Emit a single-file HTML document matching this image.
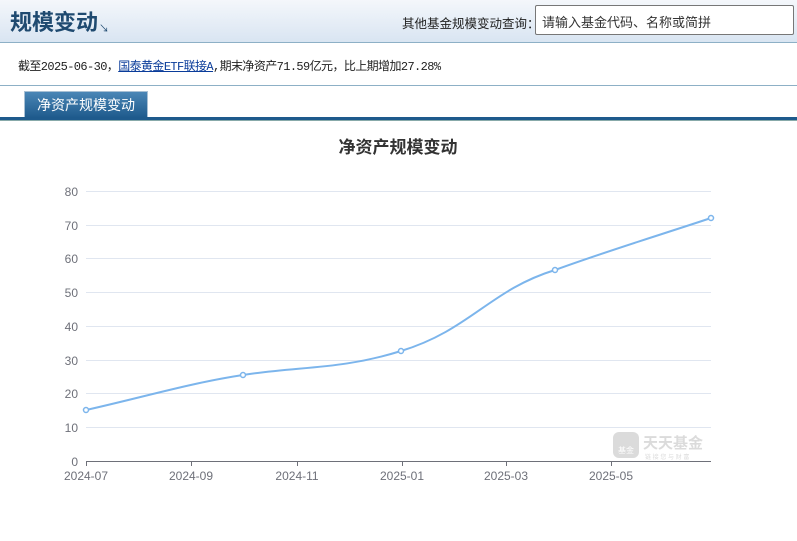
<!DOCTYPE html>
<html><head><meta charset="utf-8"><style>
body{margin:0;width:797px;height:541px;background:#fff;font-family:"Liberation Sans","Noto Sans CJK SC",sans-serif;overflow:hidden;position:relative}
.hd{position:absolute;left:0;top:0;width:797px;height:42px;background:linear-gradient(#f4f7fb,#d9e5f2);border-bottom:1px solid #8db0c6}
.t{position:absolute;left:10px;top:5px;font-size:22px;font-weight:bold;color:#1f4a70}
.arr{position:absolute;left:99px;top:20px;font-size:10px;color:#1f4a70}
.q{position:absolute;left:402px;top:13px;font-size:12.5px;color:#222;white-space:nowrap}
.in{position:absolute;left:535px;top:5px;width:259px;height:30px;border:1px solid #777;background:#fff;box-sizing:border-box;font-size:13px;color:#333;padding:6px 0 0 6px;border-radius:2px}
.info{position:absolute;left:18px;top:57px;font-size:12px;color:#222;font-family:"Liberation Mono","Noto Sans CJK SC",monospace;letter-spacing:-0.6px}
.info a{color:#0a3c9a;text-decoration:underline}
.l2{position:absolute;left:0;top:85px;width:797px;height:1px;background:#8db0c6}
.tab{position:absolute;left:24px;top:91px;width:124px;height:27px;background:linear-gradient(#4a86b6,#1e5a8c);border:1px solid #a8c0d4;border-bottom:none;box-sizing:border-box;color:#fff;font-size:14px;text-align:center;line-height:26px}
.l3{position:absolute;left:0;top:117px;width:797px;height:3px;background:#1e5a8c;border-bottom:1px solid #8aa}
</style></head><body>
<div class="hd"><div class="t">规模变动</div><div class="arr">↘</div>
<div class="q">其他基金规模变动查询：</div><div class="in">请输入基金代码、名称或简拼</div></div>
<div class="info">截至2025-06-30，<a>国泰黄金ETF联接A</a>,期末净资产71.59亿元，比上期增加27.28%</div>
<div class="l2"></div>
<div class="tab">净资产规模变动</div>
<div class="l3"></div>
<svg style="position:absolute;left:0;top:0" width="797" height="541" font-family="Liberation Sans,Noto Sans CJK SC,sans-serif">
<text x="398" y="153" text-anchor="middle" font-size="17" font-weight="bold" fill="#333">净资产规模变动</text>
<g stroke="#e0e6f0" stroke-width="1">
<line x1="86" x2="711" y1="191.5" y2="191.5"/><line x1="86" x2="711" y1="225.5" y2="225.5"/><line x1="86" x2="711" y1="258.5" y2="258.5"/><line x1="86" x2="711" y1="292.5" y2="292.5"/><line x1="86" x2="711" y1="326.5" y2="326.5"/><line x1="86" x2="711" y1="360.5" y2="360.5"/><line x1="86" x2="711" y1="393.5" y2="393.5"/><line x1="86" x2="711" y1="427.5" y2="427.5"/></g>
<line x1="86" x2="711" y1="461.5" y2="461.5" stroke="#6e7079"/>
<g stroke="#6e7079"><line x1="86.5" x2="86.5" y1="461" y2="466"/><line x1="191.5" x2="191.5" y1="461" y2="466"/><line x1="297.5" x2="297.5" y1="461" y2="466"/><line x1="402.5" x2="402.5" y1="461" y2="466"/><line x1="506.5" x2="506.5" y1="461" y2="466"/><line x1="611.5" x2="611.5" y1="461" y2="466"/></g>
<g font-size="12" fill="#6e7079" text-anchor="end">
<text x="78" y="196">80</text><text x="78" y="230">70</text><text x="78" y="263">60</text><text x="78" y="297">50</text><text x="78" y="331">40</text><text x="78" y="365">30</text><text x="78" y="398">20</text><text x="78" y="432">10</text><text x="78" y="466">0</text></g>
<g font-size="12" fill="#6e7079" text-anchor="middle">
<text x="86" y="480">2024-07</text><text x="191" y="480">2024-09</text><text x="297" y="480">2024-11</text><text x="402" y="480">2025-01</text><text x="506" y="480">2025-03</text><text x="611" y="480">2025-05</text></g>
<g opacity="0.35"><rect x="613" y="432" width="26" height="26" rx="6" fill="#999"/><text x="626" y="453" font-size="8" fill="#fff" text-anchor="middle">基金</text>
<text x="643" y="448" font-size="15" font-weight="bold" fill="#999">天天基金</text><text x="645" y="459" font-size="6" fill="#999">链 接 您 与 财 富</text></g>
<path d="M86,410 C140,398 190,383 243,375 C300,366 340,370 401,351 C470,330 490,290 555,270 C610,250 660,235 711,218" fill="none" stroke="#7cb5ec" stroke-width="2"/>
<g fill="#fff" stroke="#7cb5ec" stroke-width="1.5"><circle cx="86" cy="410" r="2.5"/><circle cx="243" cy="375" r="2.5"/><circle cx="401" cy="351" r="2.5"/><circle cx="555" cy="270" r="2.5"/><circle cx="711" cy="218" r="2.5"/></g>
</svg>
</body></html>
